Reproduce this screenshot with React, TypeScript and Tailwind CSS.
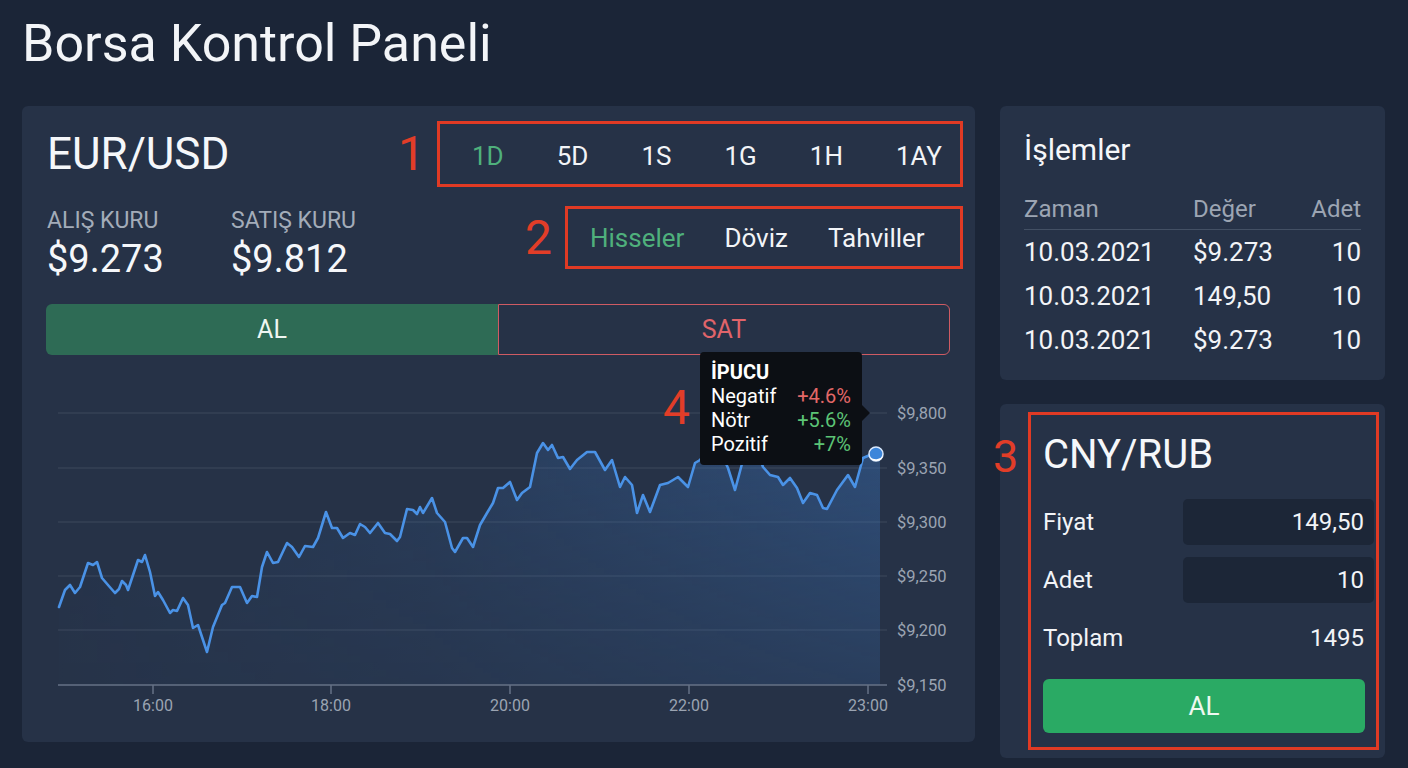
import React from "react";

const pts: [number, number][] = [
  [59,607],[65,590],[70,585],[75,593],[80,587],[88,563],[93,565],[97,562],[102,578],[108,585],[115,593],[119,589],[122,581],[126,585],[128,590],[133,575],[138,560],[142,562],[145,555],[150,572],[155,596],[158,592],[163,600],[170,613],[173,610],[177,611],[183,598],[188,605],[193,628],[198,625],[202,637],[207,652],[213,627],[222,605],[225,603],[232,587],[240,587],[247,603],[252,596],[257,597],[262,567],[267,552],[273,563],[278,562],[287,543],[292,547],[299,557],[305,546],[313,547],[318,538],[326,512],[332,528],[337,528],[343,538],[350,533],[355,535],[360,524],[365,527],[370,533],[378,523],[385,533],[390,534],[397,541],[400,537],[407,509],[413,510],[417,514],[420,507],[423,513],[432,498],[437,513],[445,522],[452,548],[455,552],[463,538],[467,538],[473,547],[480,525],[487,513],[493,503],[498,488],[503,488],[510,482],[517,500],[522,493],[530,487],[537,453],[543,443],[548,450],[552,445],[558,458],[563,457],[570,469],[577,460],[587,452],[595,452],[605,470],[612,460],[620,487],[625,477],[632,485],[637,513],[643,495],[650,512],[660,485],[668,483],[678,477],[688,487],[695,463],[700,460],[706,452],[714,447],[721,453],[728,468],[735,490],[743,460],[750,442],[757,450],[763,467],[770,475],[778,477],[783,485],[790,478],[797,488],[803,503],[810,493],[817,495],[823,508],[827,509],[837,490],[848,475],[855,487],[863,458],[870,455],[877,453]
];

const linePath = pts.map((p, i) => `${i === 0 ? "M" : "L"}${p[0]} ${p[1]}`).join(" ");
const areaPath = `${linePath} L880 453 L880 685 L59 685 Z`;

const gridY = [413, 468, 522, 576, 630];
const yLabels: [string, number][] = [
  ["$9,800", 413],
  ["$9,350", 468],
  ["$9,300", 522],
  ["$9,250", 576],
  ["$9,200", 630],
  ["$9,150", 685],
];
const xLabels: [string, number][] = [
  ["16:00", 153],
  ["18:00", 331],
  ["20:00", 510],
  ["22:00", 689],
  ["23:00", 868],
];

function Chart() {
  return (
    <div className="relative h-[387px]">
      <svg width={953} height={387} className="block">
        <defs>
          <linearGradient id="areaH" gradientUnits="userSpaceOnUse" x1="59" y1="0" x2="880" y2="0">
            <stop offset="0%" stopColor="#3f7fd0" stopOpacity="0.03" />
            <stop offset="45%" stopColor="#3f7fd0" stopOpacity="0.14" />
            <stop offset="100%" stopColor="#3f7fd0" stopOpacity="0.36" />
          </linearGradient>
          <linearGradient id="areaV" gradientUnits="userSpaceOnUse" x1="0" y1="440" x2="0" y2="685">
            <stop offset="0%" stopColor="#ffffff" stopOpacity="1" />
            <stop offset="100%" stopColor="#ffffff" stopOpacity="0.45" />
          </linearGradient>
          <mask id="areaMask" maskUnits="userSpaceOnUse" x="0" y="0" width="1000" height="800">
            <rect x="0" y="0" width="1000" height="800" fill="url(#areaV)" />
          </mask>
        </defs>
        <g transform="translate(-22,-355)">
          {gridY.map((y) => (
            <line key={y} x1={58} x2={887} y1={y} y2={y} stroke="#3d495c" strokeWidth={1} />
          ))}
          <path d={areaPath} fill="url(#areaH)" mask="url(#areaMask)" />
          <line x1={58} x2={887} y1={685} y2={685} stroke="#667286" strokeWidth={1.5} />
          {xLabels.map(([t, x]) => (
            <g key={t}>
              <line x1={x} x2={x} y1={685} y2={694} stroke="#667286" strokeWidth={1.5} />
              <text x={x} y={711} textAnchor="middle" fill="#9ba4b2" fontSize={16} fontFamily="Roboto, sans-serif">
                {t}
              </text>
            </g>
          ))}
          {yLabels.map(([t, y]) => (
            <text key={t} x={897} y={y + 6} fill="#9ba4b2" fontSize={16.5} fontFamily="Roboto, sans-serif">
              {t}
            </text>
          ))}
          <path d={linePath} fill="none" stroke="#4a92e6" strokeWidth={2.6} strokeLinejoin="round" strokeLinecap="round" />
          <circle cx={876} cy={454} r={7} fill="#3d86da" stroke="#dbeafe" strokeWidth={1.5} />
          <path d="M870 457 A7 7 0 0 0 883 456 A9 9 0 0 1 870 457 Z" fill="#ffffff" />
        </g>
      </svg>

      <div className="absolute left-[641px] top-[29px] text-[48px] leading-none text-[#e23d28]">4</div>

      <div className="absolute left-[678px] top-[-3px] w-[162px] h-[113px] bg-[#0c0f14] rounded-[4px] pl-[11px] pr-[11px] pt-[8px] text-[20px] leading-[24px] text-white">
        <div className="font-bold">İPUCU</div>
        <div className="flex justify-between">
          <span>Negatif</span>
          <span className="text-[#e36868]">+4.6%</span>
        </div>
        <div className="flex justify-between">
          <span>Nötr</span>
          <span className="text-[#5cc476]">+5.6%</span>
        </div>
        <div className="flex justify-between">
          <span>Pozitif</span>
          <span className="text-[#5cc476]">+7%</span>
        </div>
        <div className="absolute right-[-8px] top-[53px] w-0 h-0 border-y-[8px] border-y-transparent border-l-[8px] border-l-[#0c0f14]" />
      </div>
    </div>
  );
}

function LeftCard() {
  const ranges = ["1D", "5D", "1S", "1G", "1H", "1AY"];
  return (
    <div className="w-[953px] h-[636px] bg-[#263247] rounded-[6px] overflow-hidden">
      <div className="mt-[15px] h-[66px] flex items-center pl-[25px] pr-[12px]">
        <div className="text-[44px] leading-none text-[#f5f7fa]">EUR/USD</div>
        <div className="ml-auto mr-[12px] text-[48px] leading-none text-[#e23d28]">1</div>
        <div className="w-[526px] h-[66px] border-[3px] border-[#e03a24] flex items-center pl-[32px] pt-[3px] gap-[53px] text-[26px] leading-none">
          {ranges.map((r, i) => (
            <span key={r} className={i === 0 ? "text-[#4fb07c]" : "text-[#f2f4f7]"}>
              {r}
            </span>
          ))}
        </div>
      </div>

      <div className="mt-[19px] h-[63px] flex pl-[25px] pr-[12px]">
        <div className="flex">
          <div className="w-[184px]">
            <div className="mt-[3px] text-[23px] leading-none text-[#a3acb9]">ALIŞ KURU</div>
            <div className="mt-[8px] text-[38px] leading-none text-[#f5f7fa]">$9.273</div>
          </div>
          <div>
            <div className="mt-[3px] text-[23px] leading-none text-[#a3acb9]">SATIŞ KURU</div>
            <div className="mt-[8px] text-[38px] leading-none text-[#f5f7fa]">$9.812</div>
          </div>
        </div>
        <div className="ml-auto mr-[13px] self-center text-[48px] leading-none text-[#e23d28]">2</div>
        <div className="w-[398px] h-[63px] border-[3px] border-[#e03a24] flex items-center pl-[22px] gap-[40px] text-[26px] leading-none">
          <span className="text-[#4fb07c]">Hisseler</span>
          <span className="text-[#f2f4f7]">Döviz</span>
          <span className="text-[#f2f4f7]">Tahviller</span>
        </div>
      </div>

      <div className="mt-[35px] ml-[24px] mr-[25px] h-[51px] flex text-[25px] leading-none">
        <div className="w-[452px] bg-[#2e6b55] rounded-l-[6px] flex items-center justify-center text-[#eef6f1]">AL</div>
        <div className="flex-1 border border-[#cf5b63] rounded-r-[6px] flex items-center justify-center text-[#e0646a]">SAT</div>
      </div>

      <Chart />
    </div>
  );
}

function TradesCard() {
  const rows = [
    ["10.03.2021", "$9.273", "10"],
    ["10.03.2021", "149,50", "10"],
    ["10.03.2021", "$9.273", "10"],
  ];
  return (
    <div className="h-[274px] bg-[#263247] rounded-[6px] px-[24px]">
      <div className="pt-[29px] text-[30px] leading-none text-[#f5f7fa]">İşlemler</div>
      <div className="mt-[32px] grid grid-cols-[169px_1fr_auto] text-[24px] leading-[24px] text-[#9ca5b3] pb-[8px] border-b border-[#435064]">
        <span>Zaman</span>
        <span>Değer</span>
        <span className="text-right">Adet</span>
      </div>
      {rows.map((r, i) => (
        <div key={i} className="grid grid-cols-[169px_1fr_auto] text-[26px] leading-[44px] text-[#f2f4f7]">
          <span>{r[0]}</span>
          <span>{r[1]}</span>
          <span className="text-right">{r[2]}</span>
        </div>
      ))}
    </div>
  );
}

function OrderCard() {
  return (
    <div className="relative h-[354px] bg-[#263247] rounded-[6px] pt-[8px] pl-[28px] pr-[6px]">
      <div className="absolute left-[-7px] top-[30px] text-[45px] leading-none text-[#e23d28]">3</div>
      <div className="h-[338px] border-[3px] border-[#e03a24] pl-[12px] pr-[2px]">
        <div className="mt-[20px] text-[40px] leading-none text-[#f5f7fa]">CNY/RUB</div>
        <div className="mt-[24px] h-[46px] flex items-center text-[24px] leading-none text-[#f2f4f7]">
          <span>Fiyat</span>
          <div className="ml-auto w-[191px] h-full bg-[#1c2637] rounded-[5px] flex items-center justify-end pr-[10px]">149,50</div>
        </div>
        <div className="mt-[12px] h-[46px] flex items-center text-[24px] leading-none text-[#f2f4f7]">
          <span>Adet</span>
          <div className="ml-auto w-[191px] h-full bg-[#1c2637] rounded-[5px] flex items-center justify-end pr-[10px]">10</div>
        </div>
        <div className="mt-[12px] h-[46px] flex items-center justify-between pr-[10px] text-[24px] leading-none text-[#f2f4f7]">
          <span>Toplam</span>
          <span>1495</span>
        </div>
        <div className="mt-[18px] mr-[9px] h-[54px] bg-[#2aaa64] rounded-[6px] flex items-center justify-center text-[26px] leading-none text-[#eef8f1]">
          AL
        </div>
      </div>
    </div>
  );
}

export default function App() {
  return (
    <div className="w-[1408px] h-[768px] bg-[#1b2537] font-['Roboto',sans-serif] overflow-hidden px-[22px]">
      <h1 className="h-[106px] pt-[18px] text-[52px] leading-none font-normal text-[#f3f5f8]">Borsa Kontrol Paneli</h1>
      <div className="flex gap-[25px]">
        <LeftCard />
        <div className="w-[385px] flex flex-col gap-[24px]">
          <TradesCard />
          <OrderCard />
        </div>
      </div>
    </div>
  );
}
